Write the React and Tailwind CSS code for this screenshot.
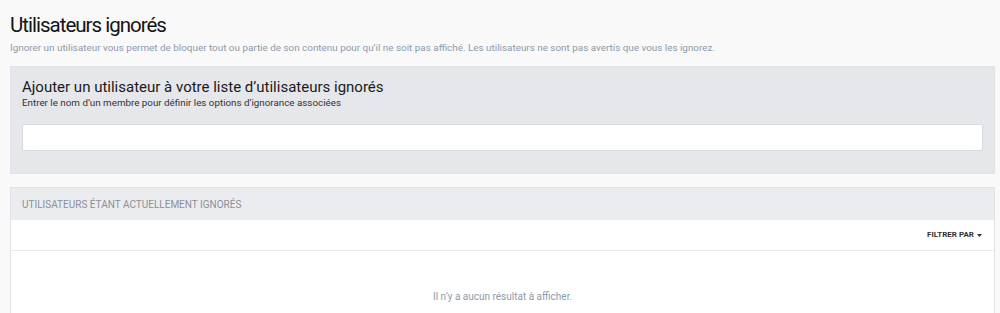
import React from 'react'

const App = () => {
  return (
    <div className="min-h-[313px] bg-[#f9f9f9] pl-[10px] pr-[5px] pt-[11px] font-['Roboto',sans-serif]">
      <h1 className="text-[20.5px] leading-[28px] tracking-[-1px] text-[#141414]">Utilisateurs ignorés</h1>
      <p className="mt-[2px] text-[9.9px] leading-[14px] text-[#8d9aa9]">
        Ignorer un utilisateur vous permet de bloquer tout ou partie de son contenu pour qu’il ne soit pas affiché. Les utilisateurs ne sont pas avertis que vous les ignorez.
      </p>

      <div className="mt-[11px] bg-[#e6e7ea] border border-[#e1e2e5] px-[11px] pt-[10px] pb-[22px]">
        <h2 className="text-[15px] leading-[20px] text-[#1a1a1a]">Ajouter un utilisateur à votre liste d’utilisateurs ignorés</h2>
        <p className="text-[9.8px] leading-[11px] text-[#333]">Entrer le nom d’un membre pour définir les options d’ignorance associées</p>
        <input type="text" className="mt-[16px] block w-full h-[27px] bg-white border border-[#d9dadd] rounded-[2px] outline-none" />
      </div>

      <div className="mt-[13px] border border-[#e1e2e5] bg-white">
        <div className="h-[32px] bg-[#ebecef] flex items-center px-[11px]">
          <span className="text-[10px] uppercase text-[#8b8f96]">Utilisateurs étant actuellement ignorés</span>
        </div>
        <div className="h-[31px] flex items-center justify-end px-[12px] border-b border-[#ebecef]">
          <span className="text-[8px] font-bold text-[#333] flex items-center gap-[3px]">
            FILTRER PAR
            <svg width="5" height="3" viewBox="0 0 5 3"><path d="M0 0h5L2.5 3z" fill="#333" /></svg>
          </span>
        </div>
        <div className="h-[70px] flex items-start justify-center pt-[38px]">
          <span className="text-[10px] text-[#8d9aa9]">Il n’y a aucun résultat à afficher.</span>
        </div>
      </div>
    </div>
  )
}

export default App
